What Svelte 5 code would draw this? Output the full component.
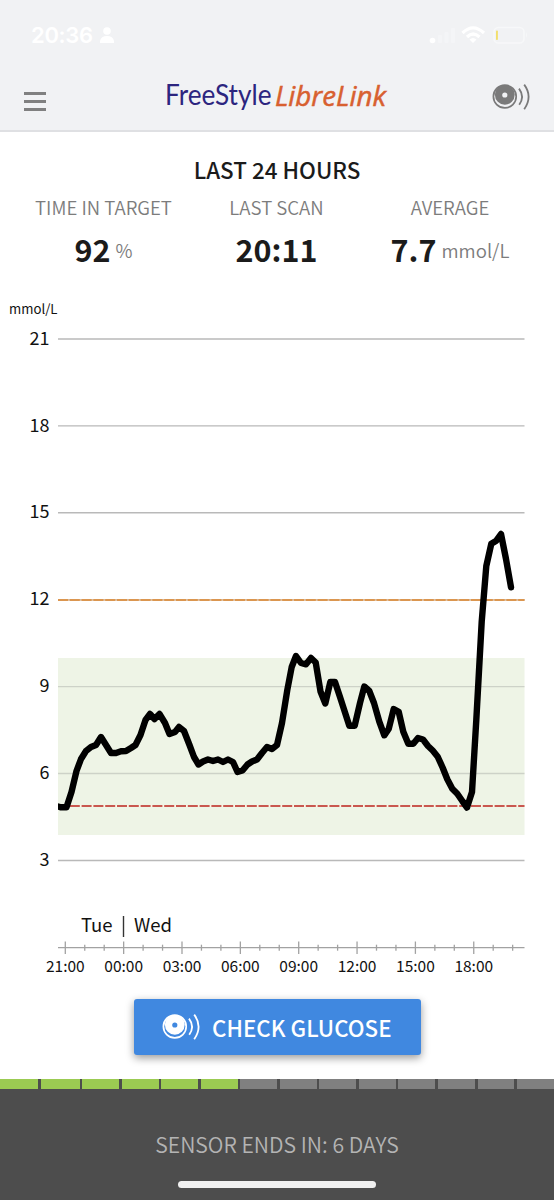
<script lang="ts">
  interface Stat {
    label: string;
    value: string;
    unit: string;
  }

  const stats: Stat[] = [
    { label: 'TIME IN TARGET', value: '92', unit: '%' },
    { label: 'LAST SCAN', value: '20:11', unit: '' },
    { label: 'AVERAGE', value: '7.7', unit: 'mmol/L' },
  ];

  const left = 58;
  const right = 524.5;
  const hourWidth = 19.45;
  const levels = [21, 18, 15, 12, 9, 6, 3];
  const times = ['21:00', '00:00', '03:00', '06:00', '09:00', '12:00', '15:00', '18:00'];
  const ticks = Array.from({ length: 24 }, (_, i) => i);

  function levelY(level: number) {
    return 49 + (21 - level) * 28.97;
  }

  function hourX(hour: number) {
    return 65.3 + hour * hourWidth;
  }

  // [x, y] of every reading, in chart units
  const readings = [
    [56, 516], [61, 517.3], [66.5, 517.3], [71.5, 502], [76.5, 481], [81, 469], [86, 461],
    [91, 457], [96, 455], [101, 447], [106, 455], [111, 463], [116, 463], [121, 461.3],
    [126, 461], [131, 458], [135.5, 455], [140.5, 445], [145.5, 430], [150, 424],
    [154.5, 429], [159.5, 424], [165, 433], [169.5, 444], [175, 442], [179, 437],
    [184, 441], [189.5, 455], [194, 467], [198.5, 474.5], [203, 471.5], [208, 469.5],
    [213, 471], [218, 469.5], [223, 472], [228, 469.5], [233, 472], [237.5, 482],
    [242.5, 480.5], [247.5, 474.5], [252, 471.5], [257, 469.5], [262, 463], [267, 457],
    [272, 459], [277, 455], [282, 433], [287.3, 400], [291.7, 377], [296, 366], [301, 373],
    [306, 374.3], [311, 368], [315.7, 372.5], [320.5, 401.5], [325.3, 413.5],
    [330.3, 392], [335, 392], [340, 407], [349.3, 435.7], [354.7, 435.7], [360, 413],
    [364.3, 396.5], [369.3, 401], [374, 413], [379.3, 431.7], [384.3, 445.3],
    [388.7, 439], [393.7, 419], [398.7, 421.7], [403.3, 441.7], [408.3, 453.7],
    [413.3, 453.7], [418, 448], [423, 449.5], [428, 456], [432.7, 460.5], [437.7, 466.7],
    [442.7, 477.7], [447.3, 489.3], [452.3, 498.7], [457.3, 503.7], [462.3, 511],
    [467, 517.5], [472, 502], [476.3, 430], [481.7, 331.7], [486.3, 276],
    [491.3, 253.7], [496.3, 250.7], [501, 244], [506, 269], [511, 297.3],
  ];
  const line = readings.map((p) => p.join(',')).join(' ');

  const sensorDays = 14;
  const usedDays = 6;
</script>

{#snippet scanIcon(hole: string)}
  <svg class="scan-icon" viewBox="0 0 38 28" width="38" height="28">
    <circle cx="12.8" cy="13.5" r="11.4" fill="none" stroke="currentColor" stroke-width="1.7" />
    <circle cx="12.8" cy="11.8" r="9.9" fill="currentColor" />
    <circle cx="12.8" cy="12" r="2.6" fill={hole} />
    <path d="M27 5.6 Q33 13.5 27.2 21.8" />
    <path d="M32.2 1.6 Q41 13.5 32.2 26.2" />
  </svg>
{/snippet}

<div class="screen">
  <header>
    <div class="status">
      <span class="clock">20:36</span>
      <svg class="person" viewBox="0 0 14 16" width="14" height="16">
        <circle cx="7" cy="4" r="3.8" />
        <path d="M0 16 V14 Q1 9 7 9 Q13 9 14 14 V16 Z" />
      </svg>
      <svg class="signals" viewBox="0 0 102 22" width="102" height="22">
        <circle cx="3.5" cy="15.5" r="2.8" fill="#fff" />
        <g fill="#f4f5f7">
          <rect x="9" y="10" width="4" height="8" rx="1" />
          <rect x="15.5" y="7" width="4" height="11" rx="1" />
          <rect x="22" y="3" width="4" height="15" rx="1" />
        </g>
        <g fill="none" stroke="#fff" stroke-width="3.2">
          <path d="M33.5 8 Q44 -2.2 55 8" />
          <path d="M38 12 Q44 6 50.5 12" />
        </g>
        <path d="M40.5 14.5 Q44 11.5 47.5 14.5 L44 18 Z" fill="#fff" />
        <rect x="65" y="2.5" width="30" height="15.5" rx="4.5" fill="none" stroke="#f7f8f9" stroke-width="1.6" />
        <path d="M97 7.5 Q99 10 97 12.5 Z" fill="#f7f8f9" />
        <rect x="67" y="5.5" width="1.9" height="9.5" rx="0.8" fill="#f2df6c" />
      </svg>
    </div>
    <nav>
      <div class="menu"><i></i><i></i><i></i></div>
      <svg class="logo" viewBox="0 0 224 36" width="224" height="36">
        <text x="-1" y="25.4" textLength="106.5" lengthAdjust="spacingAndGlyphs" class="free">FreeStyle</text>
        <text x="109" y="25.8" textLength="111" lengthAdjust="spacingAndGlyphs" class="libre">LibreLink</text>
      </svg>
      <div class="header-scan">{@render scanIcon('#f1f2f4')}</div>
    </nav>
  </header>

  <h1>LAST 24 HOURS</h1>
  <section class="stats">
    {#each stats as stat}
      <div class="stat">
        <div class="label">{stat.label}</div>
        <div class="reading">
          <b>{stat.value}</b>{#if stat.unit}<span>{stat.unit}</span>{/if}
        </div>
      </div>
    {/each}
  </section>

  <svg class="chart" viewBox="0 0 554 700" width="554" height="700">
    <text x="9" y="23.6" class="unit">mmol/L</text>
    <rect x={left} y="368" width={right - left} height="177" fill="#eef4e6" />
    {#each levels as level}
      <text x="49.5" y={levelY(level) + 5.6} class="level">{level}</text>
      <line x1={left} x2={right} y1={levelY(level)} y2={levelY(level)} stroke={level === 9 || level === 6 ? '#cdd2c8' : '#b9b9b9'} stroke-width="1.4" />
    {/each}
    <line x1={left} x2={right} y1="310" y2="310" stroke="#e3bd96" stroke-width="1.6" />
    <line x1={left} x2={right} y1="310" y2="310" class="limit high" />
    <line x1={left} x2={right} y1="516" y2="516" stroke="#fbf3e2" stroke-width="2" />
    <line x1={left} x2={right} y1="516" y2="516" class="limit low" />
    <clipPath id="plot"><rect x={left} y="0" width="490" height="660" /></clipPath>
    <polyline points={line} class="curve" clip-path="url(#plot)" />

    <text x="112.5" y="642" class="day end">Tue</text>
    <line x1="123.5" x2="123.5" y1="626" y2="647" stroke="#333" stroke-width="1.4" />
    <text x="134" y="642" class="day">Wed</text>
    <line x1={left} x2={right} y1="657.7" y2="657.7" class="axis" />
    {#each ticks as hour}
      {@const size = hour % 3 === 0 ? 6.2 : 3}
      <line x1={hourX(hour)} x2={hourX(hour)} y1={657.7 - size} y2={657.7 + size} class="axis" />
    {/each}
    {#each times as time, i}
      <text x={hourX(i * 3)} y="681.8" class="time">{time}</text>
    {/each}
  </svg>

  <button>
    {@render scanIcon('#4088e0')}
    <span>CHECK GLUCOSE</span>
  </button>

  <footer>
    <div class="days">
      {#each { length: sensorDays } as _, day}
        <div class="segment" class:used={day < usedDays}></div>
      {/each}
    </div>
    <p>SENSOR ENDS IN: 6 DAYS</p>
    <div class="home"></div>
  </footer>
</div>

<style>
  :global(body) {
    margin: 0;
    background: #fff;
  }

  .screen {
    display: flex;
    flex-direction: column;
    width: 554px;
    height: 1200px;
    overflow: hidden;
    background: #fff;
    color: #1b1b1b;
    font-family: "Noto Sans CJK SC", "Noto Sans", sans-serif;
  }

  header {
    flex: none;
    height: 130px;
    background: #f1f2f4;
    border-bottom: 2px solid #dfe0e3;
    box-sizing: content-box;
  }

  .status {
    display: flex;
    align-items: center;
    height: 70px;
    padding: 0 24px 0 31px;
    color: #fff;
    fill: #fff;
  }

  .clock {
    font: 600 22px/30px Inter, sans-serif;
    width: 69px;
    letter-spacing: -0.3px;
  }

  .signals {
    margin-left: auto;
    margin-top: 2px;
    margin-right: -1px;
  }

  nav {
    display: flex;
    align-items: flex-start;
    height: 60px;
    padding-left: 24px;
  }

  .menu {
    display: flex;
    flex-direction: column;
    gap: 5px;
    width: 22px;
    margin-top: 22px;
  }

  .menu i {
    height: 3px;
    background: #808080;
  }

  .logo {
    margin: 10px 0 0 120px;
    overflow: visible;
  }

  .free {
    font: 400 28px Lato, sans-serif;
    fill: #2c257f;
  }

  .libre {
    font: italic 500 27.5px "Open Sans", sans-serif;
    fill: #d8602f;
    stroke: #d8602f;
    stroke-width: 0.5;
  }

  .header-scan {
    display: flex;
    margin: 13px 0 0 102px;
    color: #7a7a7a;
  }

  .scan-icon path {
    fill: none;
    stroke: currentColor;
    stroke-width: 1.8;
  }

  h1 {
    flex: none;
    margin: 21px 0 0;
    height: 33px;
    font-size: 22.4px;
    line-height: 32px;
    font-weight: 500;
    text-align: center;
  }

  .stats {
    flex: none;
    display: grid;
    grid-template-columns: 207px 139px 208px;
    height: 104px;
    text-align: center;
  }

  .label {
    margin-top: 7px;
    font-size: 18.6px;
    line-height: 28px;
    font-weight: 350;
    color: #7c7c7c;
  }

  .reading {
    display: flex;
    justify-content: center;
    align-items: baseline;
    gap: 5px;
    line-height: 46px;
    margin-top: 5px;
  }

  .reading b {
    font-size: 30.5px;
    font-weight: 600;
  }

  .reading span {
    position: relative;
    top: -4px;
    font-size: 18.6px;
    font-weight: 350;
    color: #7c7c7c;
  }

  .chart {
    flex: none;
    display: block;
    margin-bottom: 9px;
    fill: #111;
  }

  .unit {
    font-size: 13.2px;
  }

  .level {
    font-size: 18px;
    text-anchor: end;
  }

  .day {
    font-size: 18.5px;
  }

  .end {
    text-anchor: end;
  }

  .time {
    font-size: 15.5px;
    text-anchor: middle;
  }

  .limit {
    stroke-width: 1.8;
    stroke-dasharray: 10 1.8;
  }

  .high {
    stroke: #db9650;
  }

  .low {
    stroke: #c9574f;
  }

  .curve {
    fill: none;
    stroke: #000;
    stroke-width: 6.4;
    stroke-linecap: round;
    stroke-linejoin: round;
  }

  .axis {
    stroke: #a2a2a2;
    stroke-width: 1.3;
  }

  button {
    flex: none;
    display: flex;
    align-items: center;
    align-self: center;
    width: 287px;
    height: 56px;
    padding: 0 0 0 28px;
    border: 0;
    border-radius: 3px;
    background: #4088e0;
    color: #fff;
    font: 500 22.3px/32px "Noto Sans CJK SC", sans-serif;
    box-shadow: 0 3px 8px rgba(0, 0, 0, 0.4);
  }

  button span {
    margin: -1px 0 0 12.5px;
    white-space: nowrap;
  }

  footer {
    display: flex;
    flex-direction: column;
    align-items: center;
    height: 121px;
    margin-top: auto;
    background: #4d4d4d;
  }

  .days {
    display: grid;
    grid-template-columns: 38px 39px repeat(12, 1fr);
    gap: 2.6px;
    width: 554px;
    height: 10px;
  }

  .segment {
    background: #808080;
  }

  .used {
    background: #9bcb52;
  }

  footer p {
    margin: 39px 0 0;
    font-size: 21.2px;
    line-height: 32px;
    font-weight: 350;
    color: #b4b4b4;
  }

  .home {
    width: 198px;
    height: 7px;
    margin-top: 21px;
    border-radius: 4px;
    background: #f0f0f0;
  }
</style>
